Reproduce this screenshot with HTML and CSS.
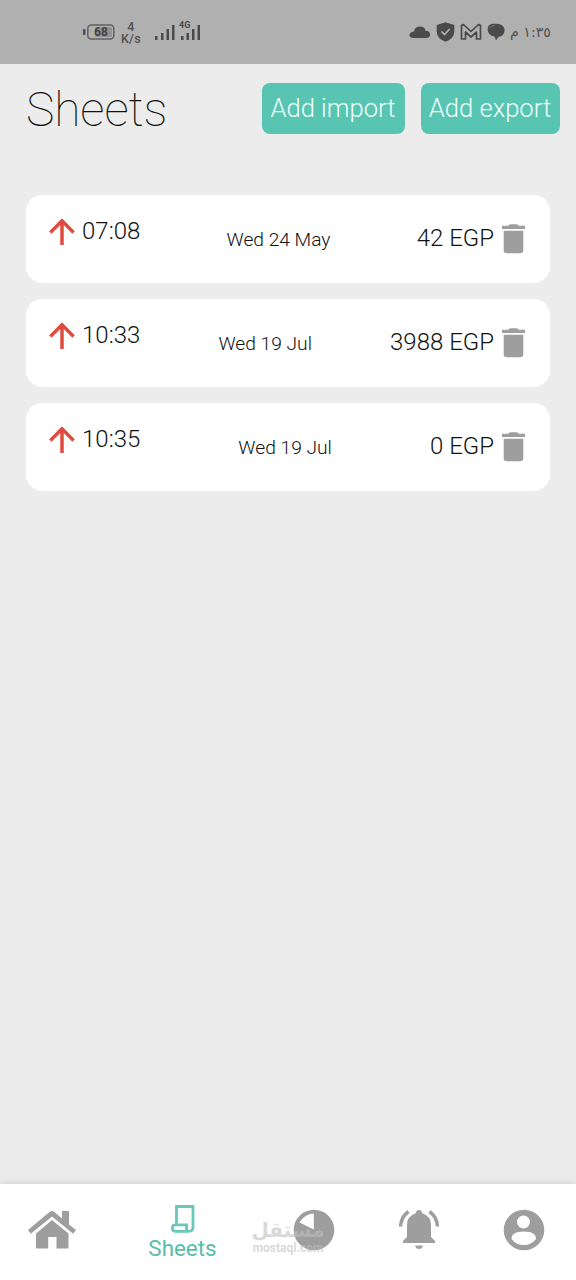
FILE: index.html
```html
<!DOCTYPE html>
<html lang="en">
<head>
<meta charset="utf-8">
<title>Sheets</title>
<link rel="stylesheet" href="styles.css">
</head>
<body>
<svg class="defs" width="0" height="0" aria-hidden="true">
  <symbol id="arrow-up" viewBox="0 0 26 26"><path d="M1.4 13.4 13 1.800l11.600 11.600M13 2.500V26" fill="none" stroke="currentColor" stroke-width="3.500"/></symbol>
  <symbol id="trash" viewBox="0 0 23 30"><path d="M0 1.700h6l2-1.400h7l2 1.400h6V5H0zM1.700 6.700h19.600v19.500q0 3-3 3H4.700q-3 0-3-3z" fill="currentColor"/></symbol>
</svg>
<div class="screen">
  <header class="status">
    <div class="status-group status-left">
      <svg class="battery" width="32" height="16" viewBox="0 0 32 16"><rect x="0" y="5" width="2.500" height="6" rx="1" fill="#4c4c4c"/><rect x="4.800" y="1" width="26" height="14" rx="3.500" fill="none" stroke="#606060" stroke-width="1.500"/><rect x="12" y="3" width="17" height="10" rx="1.500" fill="#929292"/><text class="battery-text" x="18" y="12.200" text-anchor="middle">68</text></svg>
      <div class="speed"><span>4</span><span>K/s</span></div>
      <svg class="signal" width="47" height="22" viewBox="0 0 47 22"><g fill="#4a4a4a"><path d="M1 16h2.500v4H1zM7 13h2.500v7H7zM12.500 9H15v11h-2.500zM18 5h2.500v15H18zM27 16h2.500v4H27zM32.500 13H35v7h-2.500zM38 9h2.500v11H38zM43.500 5H46v15h-2.500z"/></g><text class="network" x="25" y="8">4G</text></svg>
    </div>
    <div class="status-group status-right">
      <svg width="22" height="14" viewBox="0 0 22 14"><path d="M5 13Q.5 13 .5 10T5 6.500Q6 1.500 11 1.500q4.500 0 5.500 4.200 4.500.3 4.500 3.800T17 13z" fill="#4a4a4a"/></svg>
      <svg width="19" height="20" viewBox="0 0 19 20"><path d="M9.500.3 18.300 3v6.500q0 7-8.800 10.300Q.7 16.500.7 9.500V3z" fill="#4a4a4a"/><path d="m5.500 9.500 3 3 5.200-5.500" fill="none" stroke="#b0b0b0" stroke-width="1.700"/></svg>
      <svg width="22" height="18" viewBox="0 0 22 18"><path d="M1.500 16V2.500q1.500-1.500 3 0L11 8.500l6.500-6q1.500-1.500 3 0V16h-4V9L11 14 5.500 9v7z" fill="none" stroke="#4a4a4a" stroke-width="1.700" stroke-linejoin="round"/></svg>
      <svg width="18" height="18" viewBox="0 0 18 18"><path d="M.7 7.500Q0 1 6 .800q8-.8 10 2.500Q18.500 6 17 10q-1.500 3.500-5.500 3.700L9 17.500l-1.500-4Q2 13 .7 7.500z" fill="#4a4a4a"/><path d="M2 5.500Q3.500 2.600 8 2.300" fill="none" stroke="#8a8a8a" stroke-width=".7"/></svg>
      <span class="clock" lang="ar" dir="rtl">١:٣٥ م</span>
    </div>
  </header>
  <main class="content">
    <div class="toolbar">
      <h1 class="title">Sheets</h1>
      <button class="action import">Add import</button>
      <button class="action export">Add export</button>
    </div>
    <div class="cards">
      <article class="card">
        <div class="time"><svg class="arrow"><use href="#arrow-up"/></svg><span>07:08</span></div>
        <span class="date">Wed 24 May</span>
        <div class="amount"><span>42 EGP</span><svg class="trash"><use href="#trash"/></svg></div>
      </article>
      <article class="card">
        <div class="time"><svg class="arrow"><use href="#arrow-up"/></svg><span>10:33</span></div>
        <span class="date">Wed 19 Jul</span>
        <div class="amount"><span>3988 EGP</span><svg class="trash"><use href="#trash"/></svg></div>
      </article>
      <article class="card">
        <div class="time"><svg class="arrow"><use href="#arrow-up"/></svg><span>10:35</span></div>
        <span class="date">Wed 19 Jul</span>
        <div class="amount"><span>0 EGP</span><svg class="trash"><use href="#trash"/></svg></div>
      </article>
    </div>
  </main>
  <nav class="nav">
    <a class="nav-item"><svg width="48" height="40" viewBox="0 0 48 40"><path d="M21.500 2Q24 0 26.500 2L34 8.500V1h7v13.500l7 5.500-2.800 3.700L24 6.500 2.800 23.700 0 20z" fill="#9e9e9e"/><path d="m24 10 16.500 13.500V37q0 1.500-1.500 1.500H28.500V27h-8.300v11.500H9.500Q8 38.500 8 37V23.500z" fill="#9e9e9e"/></svg></a>
    <a class="nav-item active"><svg width="24" height="28" viewBox="0 0 24 28"><path d="M5.500 19.500V1.500h16.500V22q0 4.300-4 4.300H4.500q-3.200 0-3.200-3.200t3.200-3.200H15.500v3q0 3 2.500 3.400" fill="none" stroke="#6bc7b7" stroke-width="2.800"/></svg><span>Sheets</span></a>
    <a class="nav-item"><svg width="42" height="42" viewBox="0 0 42 42"><circle cx="21" cy="21" r="20.300" fill="#9e9e9e"/><path d="M20.800 20.500V4.500Q11.500 5 6.500 13.500z" fill="#fff"/></svg>
      <span class="watermark"><b lang="ar" dir="rtl">مستقل</b><i>mostaql.com</i></span></a>
    <a class="nav-item"><svg width="42" height="42" viewBox="0 0 42 42"><path d="M18 4q0-3 3-3t3 3q9 3 9 12v12l4 4v2H5v-2l4-4V16q0-9 9-12zM17 36.500h8q-1 3.500-4 3.500t-4-3.500z" fill="#9e9e9e"/><path d="M2.500 17.500Q3 8 10.500 2.500M39.500 17.500Q39 8 31.500 2.500" fill="none" stroke="#9e9e9e" stroke-width="3.500"/></svg></a>
    <a class="nav-item"><svg width="42" height="42" viewBox="0 0 42 42"><circle cx="21" cy="21" r="20.300" fill="#9e9e9e"/><circle cx="20.500" cy="13" r="6.500" fill="#fff"/><path d="M8.500 30q0-7.500 12.300-7.500T33 30q-4.500 6-12.200 6T8.500 30z" fill="#fff"/></svg></a>
  </nav>
</div>
</body>
</html>
```
FILE: styles.css
```css
* { box-sizing: border-box; }
body { margin: 0; font-family: Roboto, sans-serif; background: #ececec; color: #111; }
.defs { position: absolute; }
svg { display: block; flex: none; }
.screen { display: flex; flex-direction: column; height: 1280px; }
.status { height: 64px; flex: none; background: #b0b0b0; display: flex; justify-content: space-between; padding: 0 25px 0 83px; color: #505050; }
.status-group { display: flex; align-items: center; }
.battery-text { font: 700 12px Roboto, sans-serif; fill: #444; }
.speed { display: flex; flex-direction: column; align-items: center; font-size: 12.5px; line-height: 12.5px; margin: 2px 13px 0 6px; font-weight: 500; }
.speed span { letter-spacing: .2px; }
.network { font: 700 9px Roboto, sans-serif; fill: #4a4a4a; }
.signal { margin-bottom: 2px; }
.status-right { gap: 5px; }
.clock { font: 14.2px "DejaVu Sans", sans-serif; white-space: nowrap; }
.content { flex: 1; }
.toolbar { height: 131px; display: flex; align-items: flex-start; padding: 19px 16px 0 26px; }
.title { margin: -1px auto 0 0; font-size: 48px; font-weight: 100; line-height: 56px; letter-spacing: -.15px; }
.action { height: 51px; border: 0; border-radius: 8px; background: #58c4b2; color: #edfffb; font: 300 25.6px Roboto, sans-serif; padding: 0 1px 2px 0; text-align: center; white-space: nowrap; }
.import { width: 143px; margin-right: 16px; }
.export { width: 139px; }
.cards { display: flex; flex-direction: column; gap: 16px; padding: 0 26px; }
.card { height: 88px; border-radius: 16px; background: #fff; display: flex; align-items: center; justify-content: space-between; padding: 0 25px 0 23px; }
.time, .amount { display: flex; align-items: center; font-size: 24px; font-weight: 300; }
.time { gap: 7px; padding-bottom: 17px; }
.arrow { width: 26px; height: 26px; color: #e04a3f; margin-top: 3px; }
.date { font-size: 19.2px; font-weight: 300; }
.amount { gap: 8px; }
.amount span { padding-bottom: 2px; }
.trash { width: 23px; height: 30px; color: #9e9e9e; }
.nav { height: 96px; flex: none; background: #fff; display: grid; grid-template-columns: 104px 157px 106px 104px 105px; box-shadow: 0 0 8px rgba(0,0,0,.14); }
.nav-item { position: relative; display: flex; flex-direction: column; align-items: center; justify-content: center; padding-bottom: 4px; }
.active { color: #58bda9; font-size: 22.4px; line-height: 27px; gap: 2px; padding: 2px 0 0; }
.watermark { position: absolute; left: -9px; top: 34px; width: 72px; color: rgba(190,190,190,.6); display: flex; flex-direction: column; align-items: center; }
.watermark b { font: 700 20px/24px "DejaVu Sans", sans-serif; }
.watermark i { font: 700 12px/12px Roboto, sans-serif; }
```
